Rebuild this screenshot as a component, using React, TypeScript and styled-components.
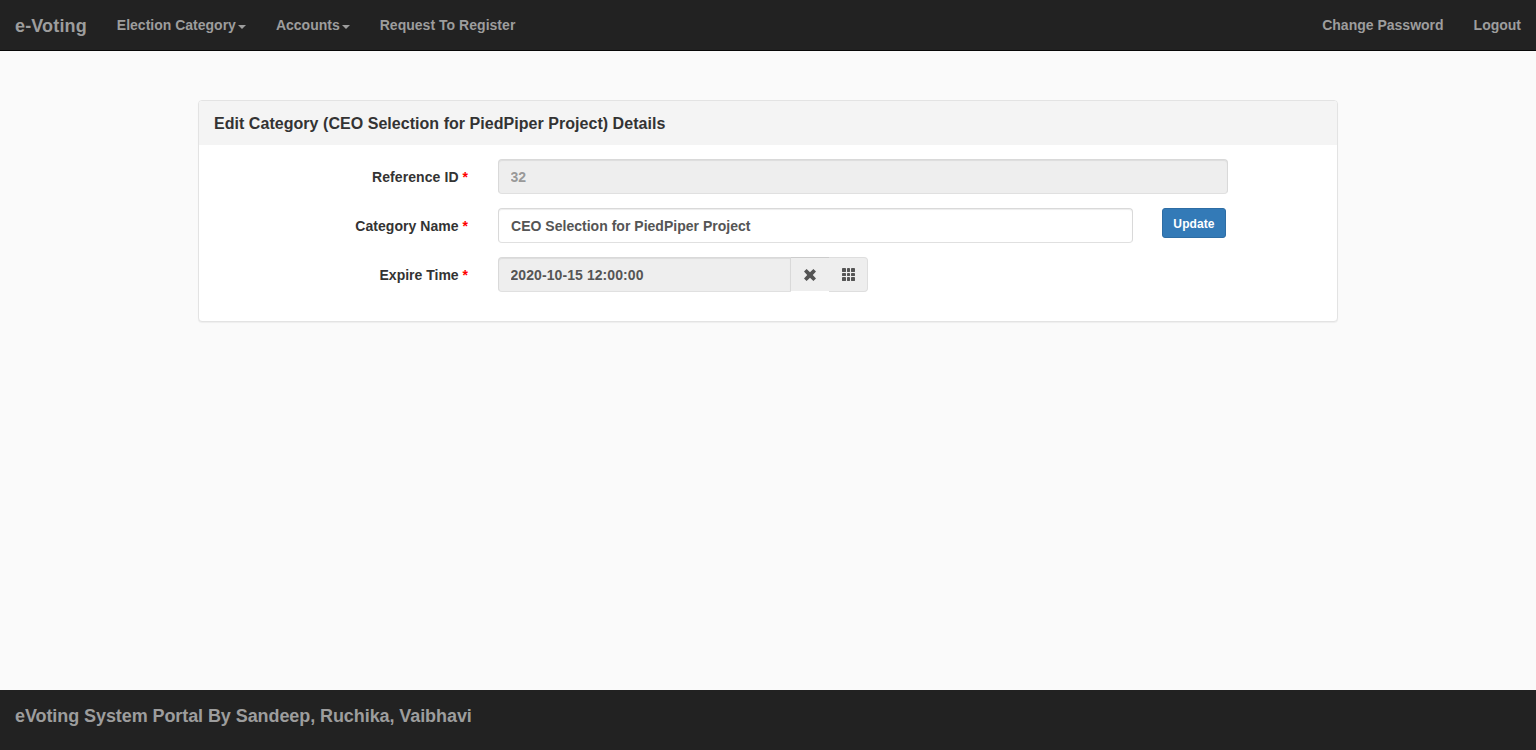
import React from "react";
import styled, { createGlobalStyle } from "styled-components";

const GlobalStyle = createGlobalStyle`
  *, *::before, *::after { box-sizing: border-box; }
  html, body { margin: 0; padding: 0; }
  body {
    background: #fafafa;
    color: #333;
    font: 700 14px/20px "Liberation Sans", Arial, sans-serif;
  }
  input, button { font: inherit; margin: 0; }
`;

const Page = styled.div`
  display: flex;
  flex-direction: column;
  height: 750px;
`;

const Navbar = styled.nav`
  display: flex;
  flex: none;
  height: 51px;
  background: #222;
  border-bottom: 1px solid #080808;
`;

const Brand = styled.a`
  padding: 16px 15px 14px;
  color: #9d9d9d;
  font-size: 18px;
  letter-spacing: 0.15px;
  white-space: nowrap;
`;

const NavList = styled.div<{ $end?: boolean }>`
  display: flex;
  margin-left: ${(p) => (p.$end ? "auto" : "0")};
`;

const NavLink = styled.a<{ $track?: number }>`
  display: flex;
  align-items: center;
  height: 50px;
  padding: 0 15px;
  color: #9d9d9d;
  letter-spacing: ${(p) => p.$track ?? 0}px;
  white-space: nowrap;
`;

const Caret = styled.span`
  margin: 3px 0 0 2px;
  border-top: 4px solid #9d9d9d;
  border-left: 4px solid transparent;
  border-right: 4px solid transparent;
`;

const Main = styled.main`
  flex: 1;
  padding-top: 49px;
`;

const Panel = styled.section`
  width: 1140px;
  height: 222px;
  margin: 0 auto;
  background: #fff;
  border: 1px solid #e3e3e3;
  border-radius: 4px;
  box-shadow: 0 1px 1px rgba(0, 0, 0, 0.05);
  overflow: hidden;
`;

const PanelTitle = styled.h3`
  height: 44px;
  margin: 0;
  padding: 1px 15px 0;
  background: #f4f4f4;
  font-size: 16px;
  line-height: 44px;
  letter-spacing: 0.04px;
`;

const Form = styled.form`
  display: flex;
  flex-direction: column;
  gap: 15px;
  padding: 14px 15px;
`;

const Row = styled.div`
  display: flex;
  align-items: flex-start;
  height: 34px;
`;

const Label = styled.label<{ $track?: number }>`
  width: 254px;
  margin-right: 30px;
  padding-top: 8px;
  text-align: right;
  letter-spacing: ${(p) => p.$track ?? 0}px;
`;

const Required = styled.span`
  color: #f00;
  letter-spacing: 0;
`;

const Field = styled.input<{ $w: number; $track?: number; $joined?: boolean }>`
  width: ${(p) => p.$w}px;
  height: 35px;
  padding: 6px 12px;
  color: #555;
  background: #fff;
  border: 1px solid #d9d9d9;
  border-bottom-color: #e0e0e0;
  border-radius: ${(p) => (p.$joined ? "4px 0 0 4px" : "4px")};
  box-shadow: inset 0 1px 1px rgba(0, 0, 0, 0.075);
  letter-spacing: ${(p) => p.$track ?? 0}px;
  outline: none;
  &:read-only { background: #eee; padding-left: 11.5px; }
  &:disabled { background: #eee; color: #999; }
`;

const UpdateButton = styled.button`
  width: 64px;
  height: 30px;
  margin-left: 29px;
  padding: 1px 0 0;
  color: #fff;
  background: #337ab7;
  border: 1px solid #2e6da4;
  border-radius: 3px;
  font-size: 12px;
  letter-spacing: 0.1px;
`;

const Addon = styled.span<{ $last?: boolean }>`
  display: flex;
  align-items: center;
  justify-content: center;
  width: ${(p) => (p.$last ? 39 : 38)}px;
  height: ${(p) => (p.$last ? 35 : 34)}px;
  background: #eee;
  border: 1px solid ${(p) => (p.$last ? "#dedede" : "#ccc")};
  border-width: ${(p) => (p.$last ? "1px 1px 1px 0" : "1px 0 0 0")};
  border-radius: ${(p) => (p.$last ? "0 4px 4px 0" : "0")};
`;

const Footer = styled.footer`
  flex: none;
  height: 60px;
  padding: 16px 15px;
  background: #222;
  color: #9d9d9d;
  font-size: 18px;
  letter-spacing: -0.08px;
`;

const RemoveIcon = () => (
  <svg width="12" height="12" viewBox="0 0 12 12" fill="#555">
    <path d="M2.6 0 6 3.2 9.4 0 12 2.6 8.8 6 12 9.4 9.4 12 6 8.8 2.6 12 0 9.4 3.2 6 0 2.6z" />
  </svg>
);

const GridIcon = () => (
  <svg width="13" height="13" viewBox="0 0 13 13" fill="#555">
    {[0, 5, 9].map((y) =>
      [0, 5, 9].map((x) => (
        <rect key={`${x}-${y}`} x={x} y={y} width={x === 5 ? 3 : 4} height={y === 5 ? 3 : 4} rx="0.4" />
      ))
    )}
  </svg>
);

export default function App() {
  return (
    <Page>
      <GlobalStyle />
      <Navbar>
        <Brand>e-Voting</Brand>
        <NavList>
          <NavLink>Election Category<Caret /></NavLink>
          <NavLink>Accounts<Caret /></NavLink>
          <NavLink $track={0.03}>Request To Register</NavLink>
        </NavList>
        <NavList $end>
          <NavLink>Change Password</NavLink>
          <NavLink>Logout</NavLink>
        </NavList>
      </Navbar>
      <Main>
        <Panel>
          <PanelTitle>Edit Category (CEO Selection for PiedPiper Project) Details</PanelTitle>
          <Form>
            <Row>
              <Label $track={0.08}>Reference ID <Required>*</Required></Label>
              <Field $w={729.5} defaultValue="32" disabled />
            </Row>
            <Row>
              <Label $track={0.05}>Category Name <Required>*</Required></Label>
              <Field $w={635} $track={0.02} defaultValue="CEO Selection for PiedPiper Project" />
              <UpdateButton type="button">Update</UpdateButton>
            </Row>
            <Row>
              <Label>Expire Time <Required>*</Required></Label>
              <Field $w={293} $track={0.08} $joined defaultValue="2020-10-15 12:00:00" readOnly />
              <Addon><RemoveIcon /></Addon>
              <Addon $last><GridIcon /></Addon>
            </Row>
          </Form>
        </Panel>
      </Main>
      <Footer>eVoting System Portal By Sandeep, Ruchika, Vaibhavi</Footer>
    </Page>
  );
}
